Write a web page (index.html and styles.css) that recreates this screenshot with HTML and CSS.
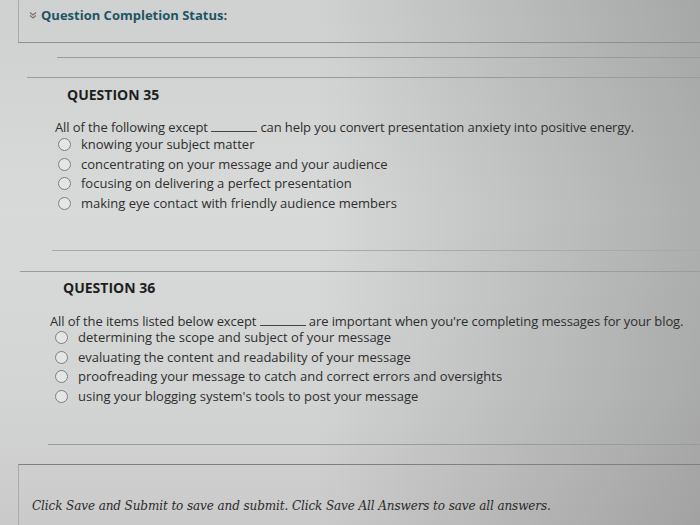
FILE: index.html
```html
<!DOCTYPE html>
<html lang="en">
<head>
<meta charset="utf-8">
<title>Questions</title>
<link rel="stylesheet" href="styles.css">
</head>
<body>
<div class="page">
  <div class="status-box">
    <svg class="chev" width="8" height="8" viewBox="0 0 8 8"><path d="M1 1.5 L4 4 L7 1.5 M1 4.5 L4 7 L7 4.5" fill="none" stroke="#777" stroke-width="1.3"/></svg>
    <span class="status-title">Question Completion Status:</span>
  </div>
  <div class="rule r-a"></div>
  <div class="rule r-b"></div>

  <section class="question q35">
    <h2 class="q-head">QUESTION 35</h2>
    <p class="q-text">All of the following except <span class="blank"></span> can help you convert presentation anxiety into positive energy.</p>
    <ul class="opts">
      <li><span class="radio"></span>knowing your subject matter</li>
      <li><span class="radio"></span>concentrating on your message and your audience</li>
      <li><span class="radio"></span>focusing on delivering a perfect presentation</li>
      <li><span class="radio"></span>making eye contact with friendly audience members</li>
    </ul>
  </section>
  <div class="rule r-c"></div>
  <div class="rule r-d"></div>

  <section class="question q36">
    <h2 class="q-head">QUESTION 36</h2>
    <p class="q-text">All of the items listed below except <span class="blank"></span> are important when you're completing messages for your blog.</p>
    <ul class="opts">
      <li><span class="radio"></span>determining the scope and subject of your message</li>
      <li><span class="radio"></span>evaluating the content and readability of your message</li>
      <li><span class="radio"></span>proofreading your message to catch and correct errors and oversights</li>
      <li><span class="radio"></span>using your blogging system's tools to post your message</li>
    </ul>
  </section>
  <div class="rule r-e"></div>

  <div class="footer-box">
    <p class="footer-text">Click Save and Submit to save and submit. Click Save All Answers to save all answers.</p>
  </div>
</div>
</body>
</html>
```
FILE: styles.css
```css
html, body {
  margin: 0;
  padding: 0;
}
body {
  width: 700px;
  height: 525px;
  overflow: hidden;
  font-family: "Open Sans", "Liberation Sans", sans-serif;
  color: #2e2e2e;
  background:
    linear-gradient(90deg, rgba(0,0,0,0) 0%, rgba(0,0,0,0) 45%, rgba(0,0,0,0.2) 100%),
    linear-gradient(180deg, #cfd0d0 0%, #d8dad9 40%, #d3d4d4 75%, #c9cac9 100%);
}
.page {
  width: 700px;
  height: 525px;
}
.status-box {
  margin-left: 18px;
  height: 43px;
  border-left: 1px solid #a9aaaa;
  border-bottom: 1px solid #8e8f8f;
  display: flex;
  align-items: flex-start;
  padding: 6px 0 0 10px;
  box-sizing: border-box;
  gap: 4px;
}
.chev {
  margin-top: 5px;
}
.status-title {
  font-weight: 700;
  font-size: 13px;
  color: #1f5563;
  line-height: 18px;
}
.rule {
  height: 1px;
  background: #9a9b9b;
}
.r-a { margin: 14px 0 0 57px; }
.r-b { margin: 19px 0 0 27px; }
.r-c { margin: 37px 0 0 52px; background: #a8a9a9; }
.r-d { margin: 20px 0 0 20px; }
.r-e { margin: 38px 0 0 48px; }

.question {
  margin: 0;
}
.q-head {
  margin: 0;
  font-size: 14px;
  font-weight: 700;
  color: #1e1e1e;
  line-height: 20px;
}
.q-text {
  margin: 0;
  font-size: 13px;
  line-height: 18px;
  letter-spacing: -0.1px;
}
.blank {
  display: inline-block;
  width: 46px;
  border-bottom: 1px solid #444;
  height: 12px;
  vertical-align: baseline;
}
.opts {
  list-style: none;
  margin: 0;
  padding: 0;
  font-size: 13px;
  line-height: 19.5px;
}
.opts li {
  display: flex;
  align-items: center;
}
.radio {
  width: 11px;
  height: 11px;
  border-radius: 50%;
  border: 1px solid #7d7e7e;
  background: #e4e5e5;
  margin-right: 10px;
  flex: none;
}
.q35 .q-head { margin: 7px 0 0 67px; }
.q35 .q-text { margin: 13px 0 0 55px; }
.q35 .opts { padding-left: 58px; margin-top: -1px; }

.q36 .q-head { margin: 6px 0 0 63px; }
.q36 .q-text { margin: 14px 0 0 50px; }
.q36 .opts { padding-left: 55px; margin-top: -2px; }

.footer-box {
  margin: 19px 0 0 18px;
  height: 70px;
  border-left: 1px solid #a9aaaa;
  border-top: 1px solid #7f8080;
  padding: 33px 0 0 13px;
  box-sizing: border-box;
}
.footer-text {
  margin: 0;
  font-family: "DejaVu Serif", "Liberation Serif", serif;
  font-style: italic;
  font-size: 12px;
  letter-spacing: -0.1px;
  color: #2a2a2a;
  line-height: 16px;
}
```
